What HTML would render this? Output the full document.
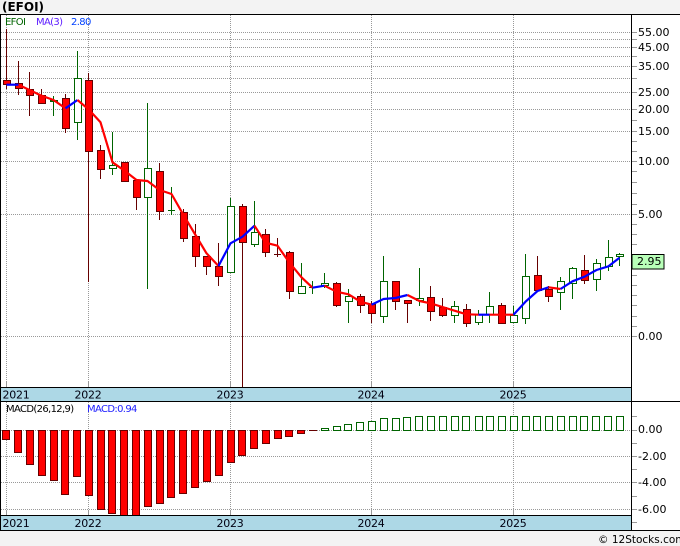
<!DOCTYPE html>
<html><head><meta charset="utf-8"><style>
html,body{margin:0;padding:0;background:#f3f3f3}
svg{display:block}
text{font-family:"DejaVu Sans",sans-serif;fill:#000}
.a{font-size:11px}.y{font-size:11px;letter-spacing:-.25px;text-anchor:middle;fill:#001}
.s{font-size:10px;letter-spacing:-.65px}
</style></head><body>
<svg width="680" height="546" viewBox="0 0 680 546" xmlns="http://www.w3.org/2000/svg" shape-rendering="crispEdges">
<rect width="680" height="546" fill="#f3f3f3"/>
<rect x="0" y="14" width="680" height="517" fill="#fff"/>
<rect x="1" y="388" width="631" height="13" fill="#add8e6"/>
<rect x="1" y="516" width="631" height="14" fill="#add8e6"/>
<text x="2" y="11" style="font-size:12px;font-weight:bold">(EFOI)</text>
<g stroke="#999" stroke-width="1" stroke-dasharray="1 1" fill="none" shape-rendering="auto">
<path d="M1 32.5H632M1 39.5H632M1 47.5H632M1 56.5H632M1 66.5H632M1 78.5H632M1 92.5H632M1 109.5H632M1 131.5H632M1 161.5H632M1 214.5H632M1 336.5H632"/>
<path d="M1 430.5H632M1 456.5H632M1 482.5H632M1 509.5H632"/>
<path d="M6.5 15V387M88.5 15V387M230.5 15V387M371.5 15V387M513.5 15V387"/>
<path d="M6.5 402V515M88.5 402V515M230.5 402V515M371.5 402V515M513.5 402V515"/>
</g>
<path stroke="#999" fill="none" d="M6.5 382V387M88.5 382V387M230.5 382V387M371.5 382V387M513.5 382V387M6.5 510V515M88.5 510V515M230.5 510V515M371.5 510V515M513.5 510V515"/>
<path stroke="#999" fill="none" d="M632 32.5h5M632 39.5h5M632 47.5h5M632 56.5h5M632 66.5h5M632 78.5h5M632 92.5h5M632 109.5h5M632 120.5h5M632 131.5h5M632 141.5h5M632 151.5h5M632 161.5h5M632 171.5h5M632 182.5h5M632 193.5h5M632 204.5h5M632 214.5h5M632 224.5h5M632 234.5h5M632 244.5h5M632 254.5h5M632 265.5h5M632 275.5h5M632 285.5h5M632 295.5h5M632 305.5h5M632 316.5h5M632 326.5h5M632 336.5h5M632 416.5h5M632 430.5h5M632 443.5h5M632 456.5h5M632 469.5h5M632 482.5h5M632 496.5h5M632 509.5h5M632 522.5h5"/>
<path stroke="#660000" fill="none" d="M6.5 29V89M18.5 61V95M29.5 72V116M41.5 89V104M65.5 94V133M88.5 73V282M100.5 145V179M124.5 162V182M136.5 180V210M159.5 163V220M183.5 209V242M195.5 224V267M206.5 256V275M218.5 243V286M242.5 204V387M265.5 229V257M277.5 238V257M289.5 251V299M336.5 282V307M360.5 294V313M371.5 301V323M395.5 281V310M407.5 300V323M430.5 286V321M442.5 298V317M466.5 304V327M501.5 303V324M537.5 256V291M548.5 286V302M584.5 255V284M274 254.5h7"/>
<path stroke="#006400" fill="none" d="M53.5 96V116M77.5 51V140M112.5 132V175M147.5 103V289M171.5 187V215M230.5 198V272M254.5 201V247M301.5 263V293M312.5 281V294M324.5 273V288M348.5 289V323M383.5 256V323M419.5 268V306M454.5 301V323M478.5 310V325M489.5 292V323M513.5 306V323M525.5 254V324M560.5 277V310M572.5 267V299M596.5 259V291M608.5 240V271M619.5 253V266M168 210.5h7M309 287.5h7"/>
<g fill="#f00" stroke="#660000">
<rect x="3.5" y="80.5" width="7" height="4"/><rect x="15.5" y="83.5" width="7" height="5"/><rect x="26.5" y="89.5" width="7" height="6"/><rect x="38.5" y="95.5" width="7" height="8"/><rect x="62.5" y="98.5" width="7" height="30"/><rect x="85.5" y="80.5" width="7" height="71"/><rect x="97.5" y="150.5" width="7" height="19"/><rect x="121.5" y="162.5" width="7" height="19"/><rect x="133.5" y="180.5" width="7" height="17"/><rect x="156.5" y="171.5" width="7" height="40"/><rect x="180.5" y="212.5" width="7" height="26"/><rect x="192.5" y="236.5" width="7" height="20"/><rect x="203.5" y="256.5" width="7" height="10"/><rect x="215.5" y="266.5" width="7" height="10"/><rect x="239.5" y="206.5" width="7" height="36"/><rect x="262.5" y="234.5" width="7" height="18"/><rect x="286.5" y="252.5" width="7" height="39"/><rect x="333.5" y="283.5" width="7" height="22"/><rect x="357.5" y="296.5" width="7" height="9"/><rect x="368.5" y="304.5" width="7" height="9"/><rect x="392.5" y="281.5" width="7" height="20"/><rect x="404.5" y="300.5" width="7" height="3"/><rect x="427.5" y="297.5" width="7" height="14"/><rect x="439.5" y="307.5" width="7" height="8"/><rect x="463.5" y="309.5" width="7" height="14"/><rect x="498.5" y="305.5" width="7" height="18"/><rect x="534.5" y="275.5" width="7" height="15"/><rect x="545.5" y="289.5" width="7" height="7"/><rect x="581.5" y="270.5" width="7" height="10"/>
</g>
<g fill="#fff" stroke="#006400">
<rect x="50.5" y="100.5" width="7" height="1"/><rect x="74.5" y="78.5" width="7" height="44"/><rect x="109.5" y="165.5" width="7" height="3"/><rect x="144.5" y="168.5" width="7" height="29"/><rect x="227.5" y="206.5" width="7" height="66"/><rect x="251.5" y="232.5" width="7" height="12"/><rect x="298.5" y="286.5" width="7" height="7"/><rect x="321.5" y="283.5" width="7" height="2"/><rect x="345.5" y="296.5" width="7" height="5"/><rect x="380.5" y="281.5" width="7" height="35"/><rect x="416.5" y="298.5" width="7" height="2"/><rect x="451.5" y="306.5" width="7" height="9"/><rect x="475.5" y="314.5" width="7" height="8"/><rect x="486.5" y="306.5" width="7" height="8"/><rect x="510.5" y="315.5" width="7" height="7"/><rect x="522.5" y="276.5" width="7" height="42"/><rect x="557.5" y="281.5" width="7" height="11"/><rect x="569.5" y="268.5" width="7" height="15"/><rect x="593.5" y="263.5" width="7" height="16"/><rect x="605.5" y="257.5" width="7" height="9"/><rect x="616.5" y="254.5" width="7" height="2"/>
</g>
<g fill="none" stroke-width="2.2" stroke-linejoin="round" shape-rendering="auto">
<polyline stroke="#f00" points="18.5,84.7 29.5,90 41.5,95.7 53.5,100 65.5,108.3"/>
<polyline stroke="#00f" points="6.5,84.7 18.5,84.7"/>
<polyline stroke="#00f" points="65.5,108.3 77.5,100"/>
<polyline stroke="#f00" points="77.5,100 88.5,109.3 100.5,122.3 112.5,162.3 124.5,170.7 136.5,180 147.5,181 159.5,190 171.5,194 183.5,215 195.5,235 206.5,253.3 218.5,266"/>
<polyline stroke="#00f" points="218.5,266 230.5,243.3 242.5,236.7 254.5,225.7"/>
<polyline stroke="#f00" points="254.5,225.7 265.5,242.7 277.5,245.7 289.5,262.7 301.5,277.3 312.5,287.7"/>
<polyline stroke="#00f" points="312.5,287.7 324.5,285.7"/>
<polyline stroke="#f00" points="324.5,285.7 336.5,291.7 348.5,294.3 360.5,301.7 371.5,304.7"/>
<polyline stroke="#00f" points="371.5,304.7 383.5,299 395.5,298 407.5,295"/>
<polyline stroke="#f00" points="407.5,295 419.5,301 430.5,303.3 442.5,307 454.5,310.7 466.5,314.3 478.5,314.7"/>
<polyline stroke="#00f" points="478.5,314.7 489.5,314.7"/>
<polyline stroke="#f00" points="489.5,314.7 501.5,314.7 513.5,314.7"/>
<polyline stroke="#00f" points="513.5,314.7 525.5,301.7 537.5,291 548.5,287.3"/>
<polyline stroke="#f00" points="548.5,287.3 560.5,289"/>
<polyline stroke="#00f" points="560.5,289 572.5,281.3 584.5,276.7 596.5,270 608.5,266.3 619.5,257.7"/>
</g>
<g fill="#f00" stroke="#660000">
<rect x="2.5" y="430.5" width="7" height="9"/><rect x="14.5" y="430.5" width="7" height="22"/><rect x="26.5" y="430.5" width="7" height="34"/><rect x="38.5" y="430.5" width="7" height="45"/><rect x="50.5" y="430.5" width="7" height="50"/><rect x="61.5" y="430.5" width="7" height="64"/><rect x="73.5" y="430.5" width="7" height="46"/><rect x="85.5" y="430.5" width="7" height="65"/><rect x="97.5" y="430.5" width="7" height="79"/><rect x="108.5" y="430.5" width="7" height="83"/><rect x="120.5" y="430.5" width="7" height="85"/><rect x="132.5" y="430.5" width="7" height="85"/><rect x="144.5" y="430.5" width="7" height="76"/><rect x="156.5" y="430.5" width="7" height="73"/><rect x="167.5" y="430.5" width="7" height="67"/><rect x="179.5" y="430.5" width="7" height="63"/><rect x="191.5" y="430.5" width="7" height="57"/><rect x="203.5" y="430.5" width="7" height="51"/><rect x="215.5" y="430.5" width="7" height="45"/><rect x="227.5" y="430.5" width="7" height="32"/><rect x="238.5" y="430.5" width="7" height="25"/><rect x="250.5" y="430.5" width="7" height="18"/><rect x="262.5" y="430.5" width="7" height="13"/><rect x="274.5" y="430.5" width="7" height="8"/><rect x="285.5" y="430.5" width="7" height="6"/><rect x="297.5" y="430.5" width="7" height="3"/>
</g>
<path stroke="#660000" d="M309 430.5h8"/>
<g fill="#fff" stroke="#006400">
<rect x="321.5" y="428.5" width="7" height="2"/><rect x="333.5" y="426.5" width="7" height="4"/><rect x="344.5" y="424.5" width="7" height="6"/><rect x="356.5" y="422.5" width="7" height="8"/><rect x="368.5" y="421.5" width="7" height="9"/><rect x="380.5" y="418.5" width="7" height="12"/><rect x="392.5" y="418.5" width="7" height="12"/><rect x="403.5" y="417.5" width="7" height="13"/><rect x="415.5" y="416.5" width="7" height="14"/><rect x="427.5" y="416.5" width="7" height="14"/><rect x="439.5" y="416.5" width="7" height="14"/><rect x="451.5" y="416.5" width="7" height="14"/><rect x="462.5" y="416.5" width="7" height="14"/><rect x="475.5" y="416.5" width="7" height="14"/><rect x="486.5" y="416.5" width="7" height="14"/><rect x="498.5" y="416.5" width="7" height="14"/><rect x="510.5" y="416.5" width="7" height="14"/><rect x="522.5" y="416.5" width="7" height="14"/><rect x="533.5" y="416.5" width="7" height="14"/><rect x="545.5" y="416.5" width="7" height="14"/><rect x="557.5" y="416.5" width="7" height="14"/><rect x="569.5" y="416.5" width="7" height="14"/><rect x="580.5" y="416.5" width="7" height="14"/><rect x="592.5" y="416.5" width="7" height="14"/><rect x="604.5" y="416.5" width="7" height="14"/><rect x="616.5" y="416.5" width="7" height="14"/>
</g>
<path stroke="#000" fill="none" d="M0 14.5H680M631.5 14V530M0.5 14V530M0 387.5H632M0 401.5H680M0 515.5H632M0 530.5H680"/>
<rect x="632" y="254" width="32" height="14.5" fill="#b8ffb8" stroke="#000" transform="translate(0 .5)" />
<g shape-rendering="auto">
<text class="s" x="5" y="25" style="fill:#006400">EFOI</text>
<text class="s" x="36" y="25" style="fill:#6020ff">MA(3)</text>
<text class="s" x="71" y="25" style="fill:#0040ff">2.80</text>
<text class="s" x="6" y="412">MACD(26,12,9)</text>
<text class="s" x="87" y="412" style="fill:#2020ff">MACD:0.94</text>
<text class="y" x="16" y="398.5">2021</text><text class="y" x="88" y="398.5">2022</text><text class="y" x="230" y="398.5">2023</text><text class="y" x="371" y="398.5">2024</text><text class="y" x="513" y="398.5">2025</text>
<text class="y" x="16" y="527">2021</text><text class="y" x="88" y="527">2022</text><text class="y" x="230" y="527">2023</text><text class="y" x="371" y="527">2024</text><text class="y" x="513" y="527">2025</text>
<text class="a" x="638" y="36">55.00</text><text class="a" x="638" y="51">45.00</text><text class="a" x="638" y="70">35.00</text><text class="a" x="638" y="96">25.00</text><text class="a" x="638" y="113">20.00</text><text class="a" x="638" y="135">15.00</text><text class="a" x="638" y="165">10.00</text><text class="a" x="638" y="218">5.00</text><text class="a" x="638" y="340">0.00</text>
<text class="a" x="637" y="265">2.95</text>
<text class="a" x="638" y="433">0.00</text><text class="a" x="638" y="460">-2.00</text><text class="a" x="638" y="486">-4.00</text><text class="a" x="638" y="513">-6.00</text>
<text x="598" y="543" style="font-size:10.5px">© 12Stocks.com</text>
</g>
</svg>
</body></html>
